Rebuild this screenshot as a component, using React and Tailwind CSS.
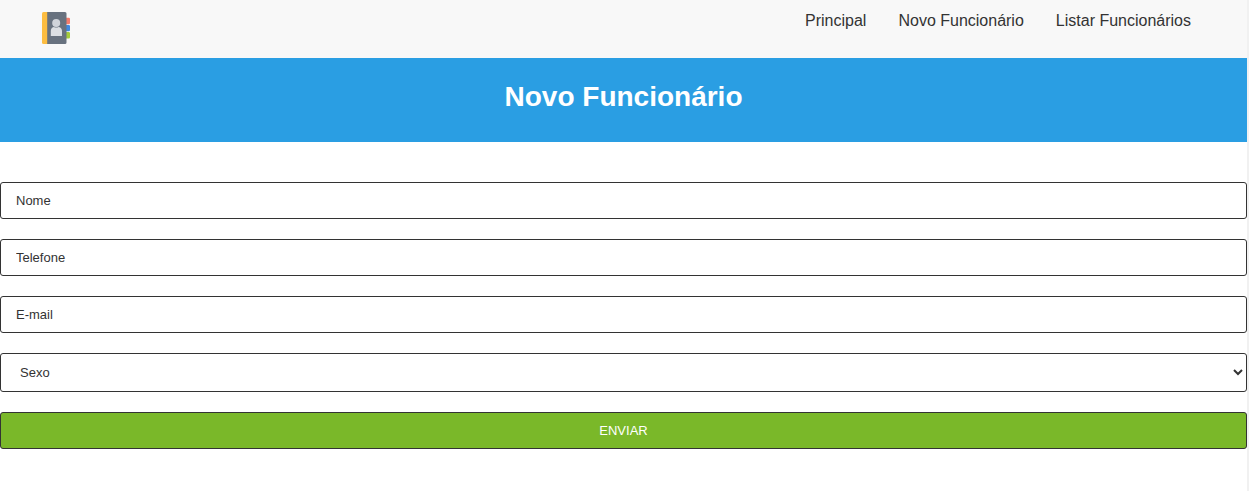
const links = ["Principal", "Novo Funcionário", "Listar Funcionários"];

const fields = [
  { id: "nome", label: "Nome", type: "text" },
  { id: "telefone", label: "Telefone", type: "tel" },
  { id: "email", label: "E-mail", type: "email" },
];

function ContactBookIcon() {
  return (
    <svg viewBox="0 0 32 32" className="block size-8" aria-hidden="true">
      <path d="M26 5.800h2.800a1.200 1.200 0 0 1 1.200 1.200v4a1.200 1.200 0 0 1-1.200 1.200H26z" fill="#f47c6c" />
      <path d="M26 12.900h2.800a1.200 1.200 0 0 1 1.200 1.200v4a1.200 1.200 0 0 1-1.200 1.200H26z" fill="#4088e0" />
      <path d="M26 20h2.800a1.200 1.200 0 0 1 1.200 1.200v4a1.200 1.200 0 0 1-1.200 1.200H26z" fill="#a4cc3c" />
      <path d="M7 0h18a1.500 1.500 0 0 1 1.500 1.500v29A1.500 1.500 0 0 1 25 32H7z" fill="#68727f" />
      <path d="M3.500 0H7.200v32H3.500A1.500 1.500 0 0 1 2 30.500v-29A1.500 1.500 0 0 1 3.500 0z" fill="#fdbd40" />
      <circle cx="16.200" cy="11" r="4" fill="#d0d4da" />
      <path d="M10.800 24v-4.800a4.200 4.200 0 0 1 3-4.200q2.500 1 5 0a4.200 4.200 0 0 1 3.200 4.200V24z" fill="#dcdfe3" />
    </svg>
  );
}

export default function App() {
  return (
    <div className="min-h-screen border-r-2 border-[#f1f1f1] bg-white font-['Liberation_Sans',Arial,sans-serif] text-[#333333]">
      <header className="flex items-start justify-between bg-[#f8f8f8] pt-3 pr-14 pb-3.5 pl-10">
        <a href="#principal" aria-label="Principal">
          <ContactBookIcon />
        </a>
        <nav className="flex gap-8 text-base leading-[18px]">
          {links.map((text) => (
            <a key={text} href="#">{text}</a>
          ))}
        </nav>
      </header>
      <main>
        <h1 className="bg-[#2a9ee3] pt-[23px] pb-[29px] text-center text-[28px] leading-8 font-bold text-white">
          Novo Funcionário
        </h1>
        <form className="flex flex-col gap-5 py-10">
          {fields.map(({ id, label, type }) => (
            <input
              key={id}
              id={id}
              name={id}
              type={type}
              aria-label={label}
              placeholder={label}
              className="block w-full rounded-[3px] border border-[#333333] bg-white px-[15px] py-2.5 text-[13px] leading-[15px] text-[#333333] placeholder:text-[#333333]"
            />
          ))}
          <select
            id="sexo"
            name="sexo"
            aria-label="Sexo"
            className="block w-full rounded-[3px] border border-[#333333] bg-white py-2.5 pl-[15px] text-[13px] leading-[17px] text-[#333333]"
          >
            <option>Sexo</option>
            <option>Feminino</option>
            <option>Masculino</option>
          </select>
          <button
            type="submit"
            className="w-full rounded-[3px] border border-[#333333] bg-[#7ab829] py-2.5 text-[13px] leading-[15px] text-white"
          >
            ENVIAR
          </button>
        </form>
      </main>
    </div>
  );
}
